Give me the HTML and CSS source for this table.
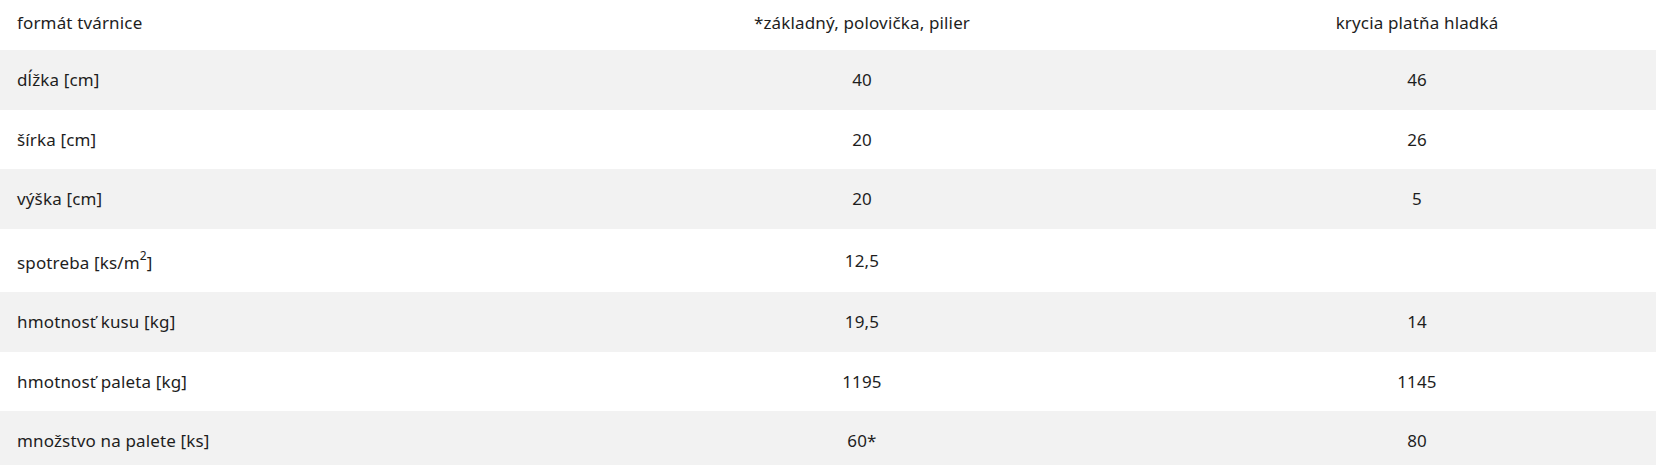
FILE: index.html
```html
<!DOCTYPE html>
<html lang="sk">
<head>
<meta charset="utf-8">
<title>Tvárnice</title>
<link rel="stylesheet" href="styles.css">
</head>
<body>
<table class="spec">
  <colgroup>
    <col class="c1"><col class="c2"><col class="c3">
  </colgroup>
  <thead>
    <tr class="head"><th class="label">formát tvárnice</th><th>*základný, polovička, pilier</th><th>krycia platňa hladká</th></tr>
  </thead>
  <tbody>
    <tr><td class="label">dĺžka [cm]</td><td>40</td><td>46</td></tr>
    <tr><td class="label">šírka [cm]</td><td>20</td><td>26</td></tr>
    <tr><td class="label">výška [cm]</td><td>20</td><td>5</td></tr>
    <tr><td class="label">spotreba [ks/m<sup>2</sup>]</td><td>12,5</td><td></td></tr>
    <tr><td class="label">hmotnosť kusu [kg]</td><td>19,5</td><td>14</td></tr>
    <tr><td class="label">hmotnosť paleta [kg]</td><td>1195</td><td>1145</td></tr>
    <tr><td class="label">množstvo na palete [ks]</td><td>60*</td><td>80</td></tr>
  </tbody>
</table>
</body>
</html>
```

FILE: styles.css
```css
html, body {
  margin: 0;
  padding: 0;
  background: #ffffff;
}
body {
  font-family: "Noto Sans", "Open Sans", "Liberation Sans", sans-serif;
  font-size: 17px;
  letter-spacing: 0.15px;
  color: #1e1e1e;
}
.spec {
  width: 1656px;
  border-collapse: collapse;
  table-layout: fixed;
}
.c1 { width: 546px; }
.c2 { width: 632px; }
.c3 { width: 478px; }
.spec th {
  font-weight: normal;
  text-align: center;
  padding: 11px 17px 15px 17px;
  line-height: 24px;
  height: 24px;
}
.spec td {
  text-align: center;
  padding: 18px 17px;
  line-height: 23.5px;
  height: 23.5px;
}
.spec .label {
  text-align: left;
}
.spec tbody tr:nth-child(odd) {
  background: #f2f2f2;
}
.spec sup {
  font-size: 12px;
  line-height: 18px;
  vertical-align: 9px;
}
```
